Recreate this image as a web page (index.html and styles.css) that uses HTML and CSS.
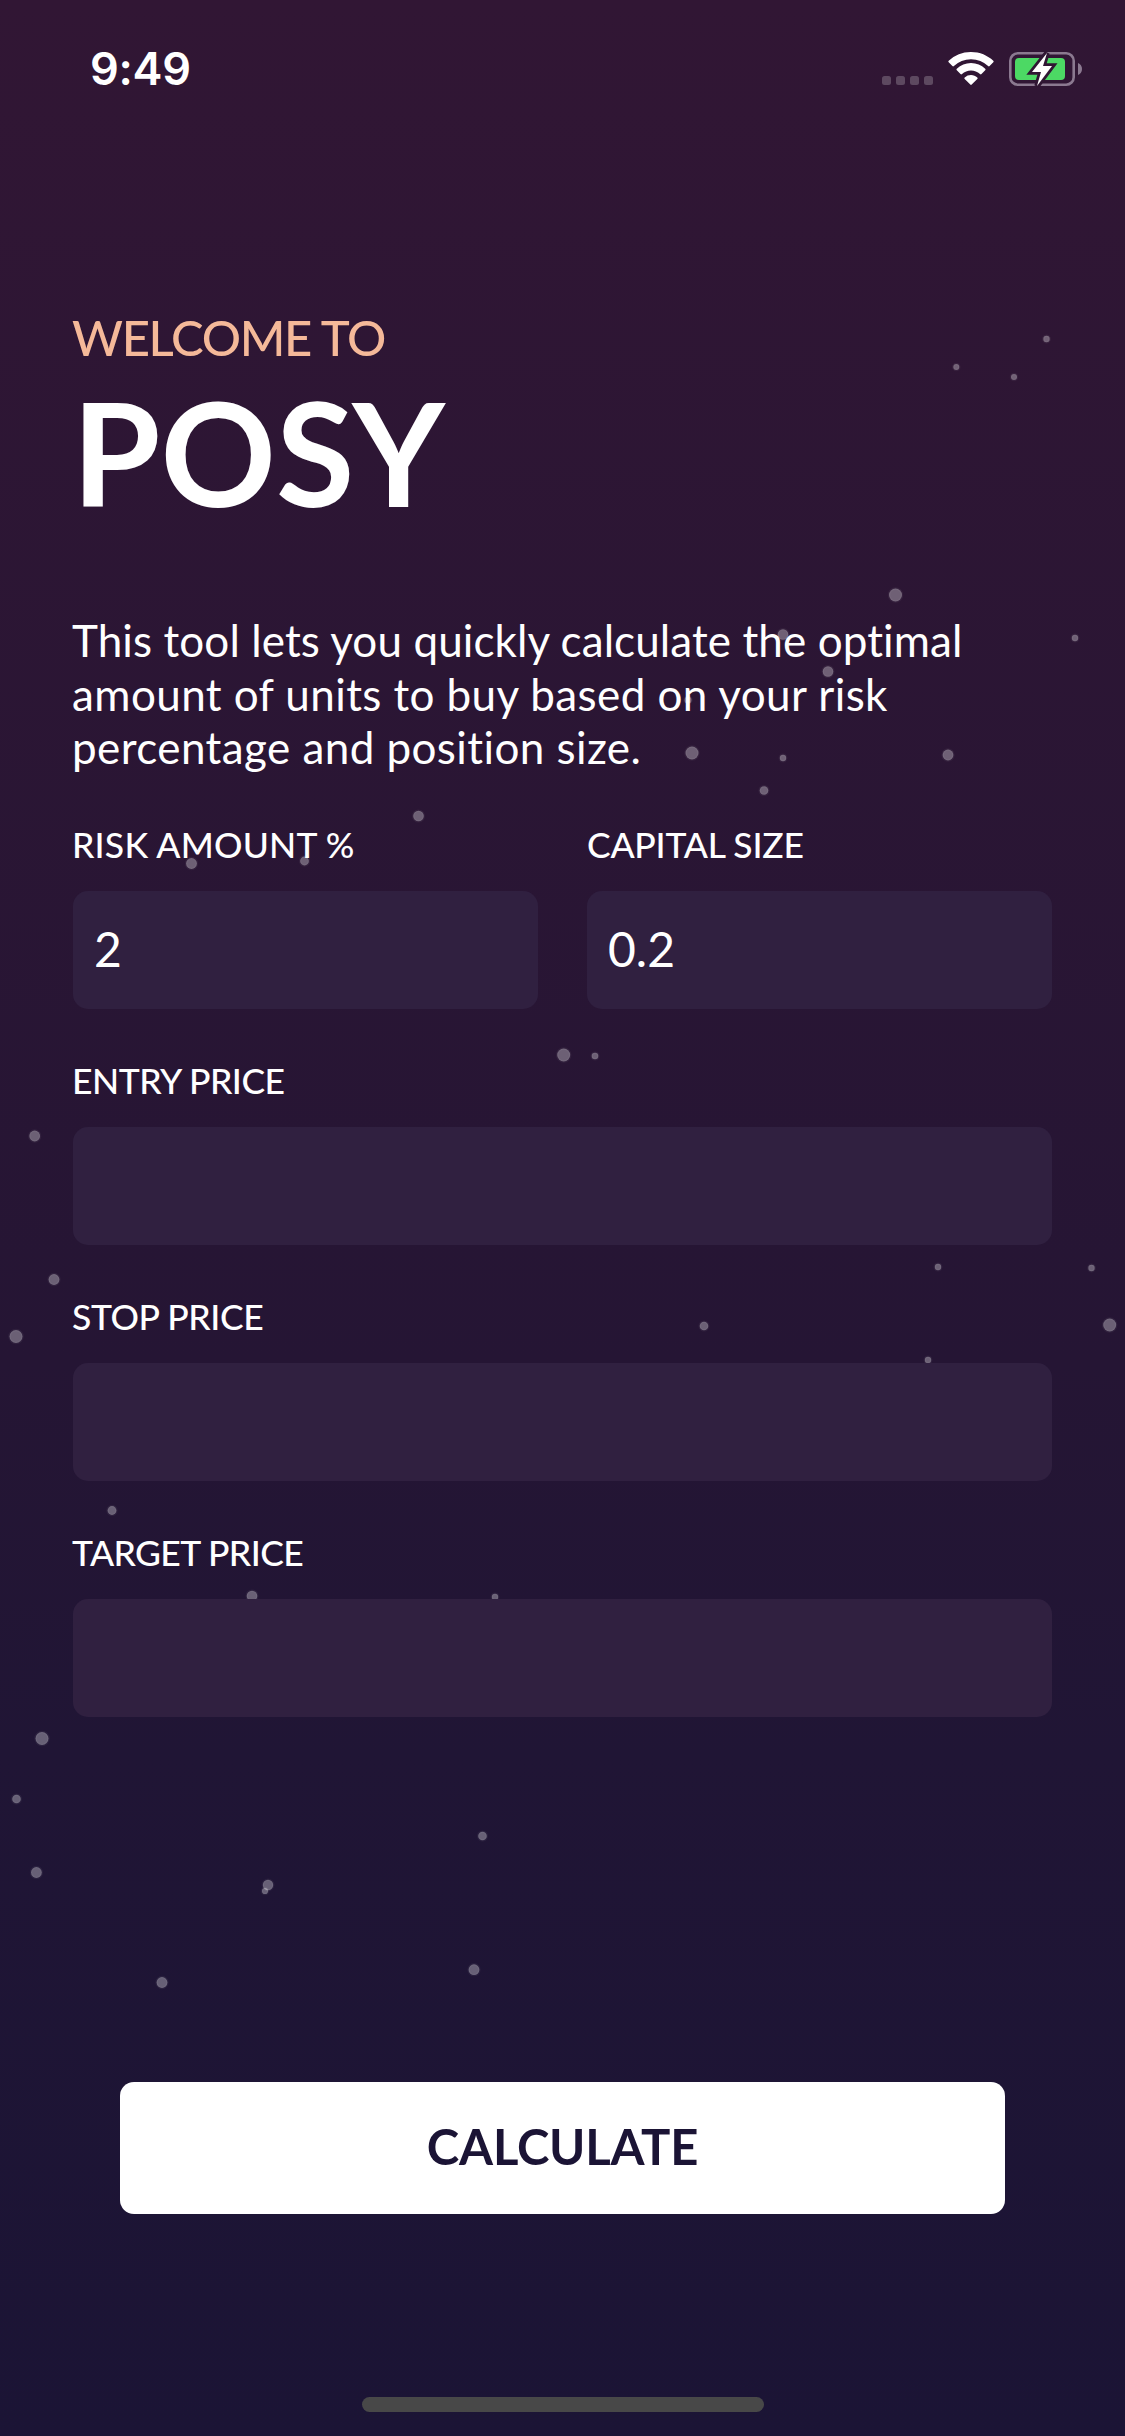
FILE: index.html
```html
<!DOCTYPE html>
<html lang="en">
<head>
<meta charset="utf-8">
<title>Posy</title>
<link rel="stylesheet" href="styles.css">
</head>
<body>
<main class="screen">
  <svg class="stars" viewBox="0 0 1125 2436" aria-hidden="true">
    <circle cx="956.3" cy="367" r="3"/><circle cx="1014" cy="377" r="3"/><circle cx="1046.5" cy="339" r="3.2"/>
    <circle cx="895.5" cy="595" r="6.5"/><circle cx="1075" cy="638" r="3.2"/><circle cx="783" cy="634.5" r="5.3"/>
    <circle cx="828" cy="671.5" r="5.3"/><circle cx="688" cy="700" r="3.5"/><circle cx="692" cy="753" r="6.5"/>
    <circle cx="783" cy="758" r="3.2"/><circle cx="948" cy="755" r="5.4"/><circle cx="764" cy="790.5" r="4.3"/>
    <circle cx="418.5" cy="816" r="5.3"/><circle cx="191.5" cy="863.5" r="5.4"/><circle cx="304.5" cy="861" r="4.4"/>
    <circle cx="563.7" cy="1055" r="6.5"/><circle cx="595" cy="1056" r="3.3"/><circle cx="34.7" cy="1136" r="5.4"/>
    <circle cx="54" cy="1279.5" r="5.4"/><circle cx="938" cy="1267" r="3.2"/><circle cx="1091.5" cy="1268" r="3.2"/>
    <circle cx="704" cy="1326" r="4.3"/><circle cx="1109.7" cy="1325" r="6.5"/><circle cx="928" cy="1360" r="3.2"/>
    <circle cx="16" cy="1336.5" r="6.5"/><circle cx="112" cy="1510.5" r="4.4"/><circle cx="252" cy="1596" r="5.3"/>
    <circle cx="495" cy="1597" r="3.2"/><circle cx="42" cy="1738.5" r="6.5"/><circle cx="16.5" cy="1799" r="4.3"/>
    <circle cx="36.4" cy="1872.5" r="5.4"/><circle cx="482.5" cy="1836" r="4.3"/><circle cx="268" cy="1885" r="5.2"/>
    <circle cx="265" cy="1891" r="3.1"/><circle cx="162" cy="1982.5" r="5.4"/><circle cx="474" cy="1969.7" r="5.4"/>
  </svg>

  <header class="status">
    <span class="status-time">9:49</span>
    <svg class="status-icons" viewBox="0 0 204 40" aria-hidden="true">
      <g fill="#fff" fill-opacity=".22">
        <rect x="2" y="26" width="9" height="9" rx="2.5"/><rect x="16" y="26" width="9" height="9" rx="2.5"/>
        <rect x="30" y="26" width="9" height="9" rx="2.5"/><rect x="44" y="26" width="9" height="9" rx="2.5"/>
      </g>
      <g fill="#fff">
        <path d="M91 2c8.8 0 16.700 3.400 22.300 8.800a1 1 0 0 1 0 1.500l-3.700 3.800a1 1 0 0 1-1.500 0A24.500 24.500 0 0 0 91 9.200a24.500 24.500 0 0 0-17.100 6.900 1 1 0 0 1-1.500 0l-3.700-3.800a1 1 0 0 1 0-1.500A32 32 0 0 1 91 2z"/>
        <path d="M91 13c5.500 0 10.400 2.200 14.200 5.700a1 1 0 0 1 0 1.500l-3.700 3.800a1 1 0 0 1-1.500 0A13.500 13.500 0 0 0 91 20.400a13.500 13.500 0 0 0-9 3.600 1 1 0 0 1-1.500 0l-3.700-3.800a1 1 0 0 1 0-1.500A21 21 0 0 1 91 13z"/>
        <path d="M91 25c2.400 0 4.700.9 6.300 2.400a1 1 0 0 1 0 1.500l-5.600 5.700a1 1 0 0 1-1.400 0l-5.600-5.700a1 1 0 0 1 0-1.500A9.500 9.500 0 0 1 91 25z"/>
      </g>
      <rect x="130.300" y="3.300" width="63.400" height="31.400" rx="7.500" fill="none" stroke="#8b7990" stroke-width="2.600"/>
      <path d="M198 13v12c2.500-1 4-3.300 4-6s-1.500-5-4-6z" fill="#8b7990"/>
      <rect x="135" y="8" width="50" height="22" rx="4" fill="#4cd964"/>
      <path d="M167 3L152 22h9l-4 14 15-20h-9z" fill="#fff" stroke="#301633" stroke-width="5.500" paint-order="stroke"/>
    </svg>
  </header>

  <section class="intro">
    <p class="eyebrow">WELCOME TO</p>
    <h1 class="brand">POSY</h1>
    <p class="lead">
      <span class="lead-line lead-line-1">This tool lets you quickly calculate the optimal</span>
      <span class="lead-line lead-line-2">amount of units to buy based on your risk</span>
      <span class="lead-line lead-line-3">percentage and position size.</span>
    </p>
  </section>

  <form class="form">
    <div class="row">
      <label class="field"><span class="label label-risk">RISK AMOUNT %</span><input class="box" type="text" value="2"></label>
      <label class="field"><span class="label label-capital">CAPITAL SIZE</span><input class="box" type="text" value="0.2"></label>
    </div>
    <label class="field"><span class="label label-entry">ENTRY PRICE</span><input class="box" type="text"></label>
    <label class="field"><span class="label label-stop">STOP PRICE</span><input class="box" type="text"></label>
    <label class="field"><span class="label label-target">TARGET PRICE</span><input class="box" type="text"></label>
    <button class="calculate" type="button">CALCULATE</button>
  </form>

  <div class="home-indicator"></div>
</main>
</body>
</html>
```
FILE: styles.css
```css
* { box-sizing: border-box; margin: 0; padding: 0; }

body {
  font-family: Lato, "Open Sans", sans-serif;
  font-variant-ligatures: none;
  color: #fff;
  background: #1b1434;
}

.screen {
  position: relative;
  isolation: isolate;
  display: flex;
  flex-direction: column;
  width: 1125px;
  height: 2436px;
  padding-bottom: 24px;
  overflow: hidden;
  background: linear-gradient(#311634, #251534 56%, #201535 72%, #1b1435);
}

.stars {
  position: absolute;
  inset: 0;
  z-index: -1;
  width: 1125px;
  height: 2436px;
  fill: #fff;
  fill-opacity: .32;
  stroke: #fff;
  stroke-opacity: .05;
  stroke-width: 2.5px;
}

.status {
  display: flex;
  justify-content: space-between;
  height: 308px;
  padding: 50px 41px 0 90px;
}

.status-time { font: 600 45px/38px Inter, sans-serif; letter-spacing: -.3px; }

.status-icons { width: 204px; height: 40px; }

.intro { padding: 0 72px; }

.eyebrow {
  color: #f5b999;
  font-size: 49px;
  font-weight: 500;
  line-height: 59px;
  letter-spacing: -1.300px;
  white-space: nowrap;
}

.brand {
  margin-top: 10px;
  font-size: 143px;
  font-weight: 700;
  line-height: 150px;
  white-space: nowrap;
}

.lead {
  margin-top: 87px;
  font-size: 44px;
  line-height: 53.700px;
}

.lead-line { display: block; white-space: nowrap; }
.lead-line-1 { letter-spacing: .1px; }
.lead-line-2 { letter-spacing: .41px; }
.lead-line-3 { letter-spacing: .42px; }

.form {
  display: flex;
  flex-direction: column;
  gap: 48px;
  margin-top: 46px;
  padding: 0 73px;
}

.row {
  display: grid;
  grid-template-columns: 1fr 1fr;
  gap: 49px;
}

.field {
  display: flex;
  flex-direction: column;
  gap: 24px;
  min-width: 0;
}

.label {
  padding-top: 2px;
  margin-left: -1px;
  font-size: 35.500px;
  font-weight: 500;
  line-height: 44px;
  white-space: nowrap;
}

.label-risk { letter-spacing: .2px; }
.label-capital { letter-spacing: -.25px; margin-left: 0; }
.label-entry { letter-spacing: -.5px; }
.label-stop { letter-spacing: -.4px; }
.label-target { letter-spacing: -.6px; }

.box {
  width: 100%;
  height: 118px;
  padding: 0 21px 4px;
  border: 0;
  border-radius: 15px;
  background: #302040;
  color: #fff;
  font: 400 48px/58px Lato, sans-serif;
}

.calculate {
  height: 131.500px;
  margin: 317px 47px 0;
  padding-bottom: 3px;
  border: 0;
  border-radius: 14px;
  background: #fff;
  color: #1b1435;
  font: 700 49px/60px Lato, sans-serif;
  letter-spacing: -.2px;
}

.home-indicator {
  width: 402px;
  height: 15px;
  margin: auto auto 0;
  border-radius: 8px;
  background: #484848;
}
```
